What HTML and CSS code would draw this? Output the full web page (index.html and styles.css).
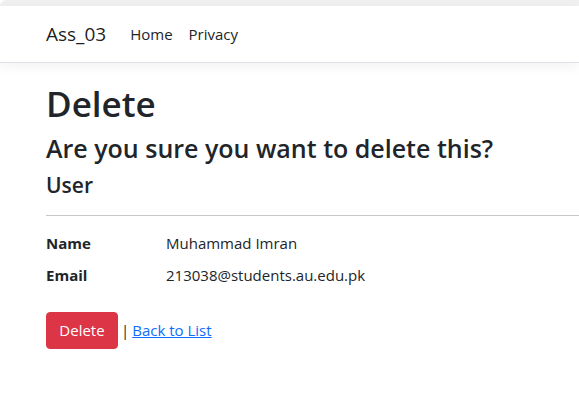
FILE: index.html
```html
<!DOCTYPE html>
<html lang="en">
<head>
<meta charset="utf-8">
<title>Delete - Ass_03</title>
<link rel="stylesheet" href="styles.css">
</head>
<body>
<div class="topband"></div>
<header class="navbar">
  <a class="brand" href="#">Ass_03</a>
  <nav class="nav">
    <a class="nav-link" href="#">Home</a>
    <a class="nav-link" href="#">Privacy</a>
  </nav>
</header>
<main class="container">
  <h1 class="title">Delete</h1>
  <h3 class="question">Are you sure you want to delete this?</h3>
  <div class="details">
    <h4 class="entity">User</h4>
    <hr class="rule">
    <dl class="fields">
      <dt>Name</dt>
      <dd>Muhammad Imran</dd>
      <dt>Email</dt>
      <dd>213038@students.au.edu.pk</dd>
    </dl>
    <form class="actions">
      <button type="button" class="btn-danger">Delete</button> | <a class="back" href="#">Back to List</a>
    </form>
  </div>
</main>
</body>
</html>
```
FILE: styles.css
```css
html, body {
  margin: 0;
  padding: 0;
  background: #fff;
}
body {
  font-family: "Open Sans", "Liberation Sans", sans-serif;
  font-size: 15px;
  line-height: 1.5;
  color: #212529;
  overflow: hidden;
}
.topband {
  height: 6px;
  background: #f0f0f0;
  border-top-left-radius: 6px;
}
.navbar {
  height: 56px;
  display: flex;
  align-items: center;
  padding-left: 46px;
  background: #fff;
  border-bottom: 1px solid #e0e0e6;
  box-shadow: 0 4px 12px rgba(0, 0, 0, 0.05);
}
.brand {
  font-size: 19px;
  color: rgba(0, 0, 0, 0.9);
  text-decoration: none;
  margin-right: 24px;
}
.nav {
  display: flex;
  gap: 16px;
}
.nav-link {
  color: #212529;
  text-decoration: none;
  font-size: 15px;
}
.container {
  padding-left: 46px;
}
.title {
  font-size: 35px;
  font-weight: 600;
  line-height: 1.2;
  margin: 20px 0 0;
}
.question {
  font-size: 25px;
  font-weight: 600;
  line-height: 1.2;
  margin: 8px 0 0;
}
.entity {
  font-size: 21px;
  font-weight: 600;
  line-height: 1.2;
  margin: 10px 0 0;
}
.rule {
  border: 0;
  border-top: 1px solid #c8c9ca;
  margin: 17px 0 0;
}
.fields {
  display: grid;
  grid-template-columns: 120px 1fr;
  row-gap: 9px;
  margin: 16px 0 0;
}
.fields dt {
  font-weight: 700;
}
.fields dd {
  margin: 0;
}
.actions {
  margin-top: 26px;
  display: flex;
  align-items: center;
  gap: 3px;
}
.btn-danger {
  font-family: inherit;
  font-size: 15px;
  line-height: 1.5;
  color: #fff;
  background: #dc3545;
  border: 1px solid #dc3545;
  border-radius: 4px;
  padding: 6px 12px;
  width: 72px;
  height: 37px;
}
.back {
  color: #0d6efd;
  text-decoration: underline;
}
```
